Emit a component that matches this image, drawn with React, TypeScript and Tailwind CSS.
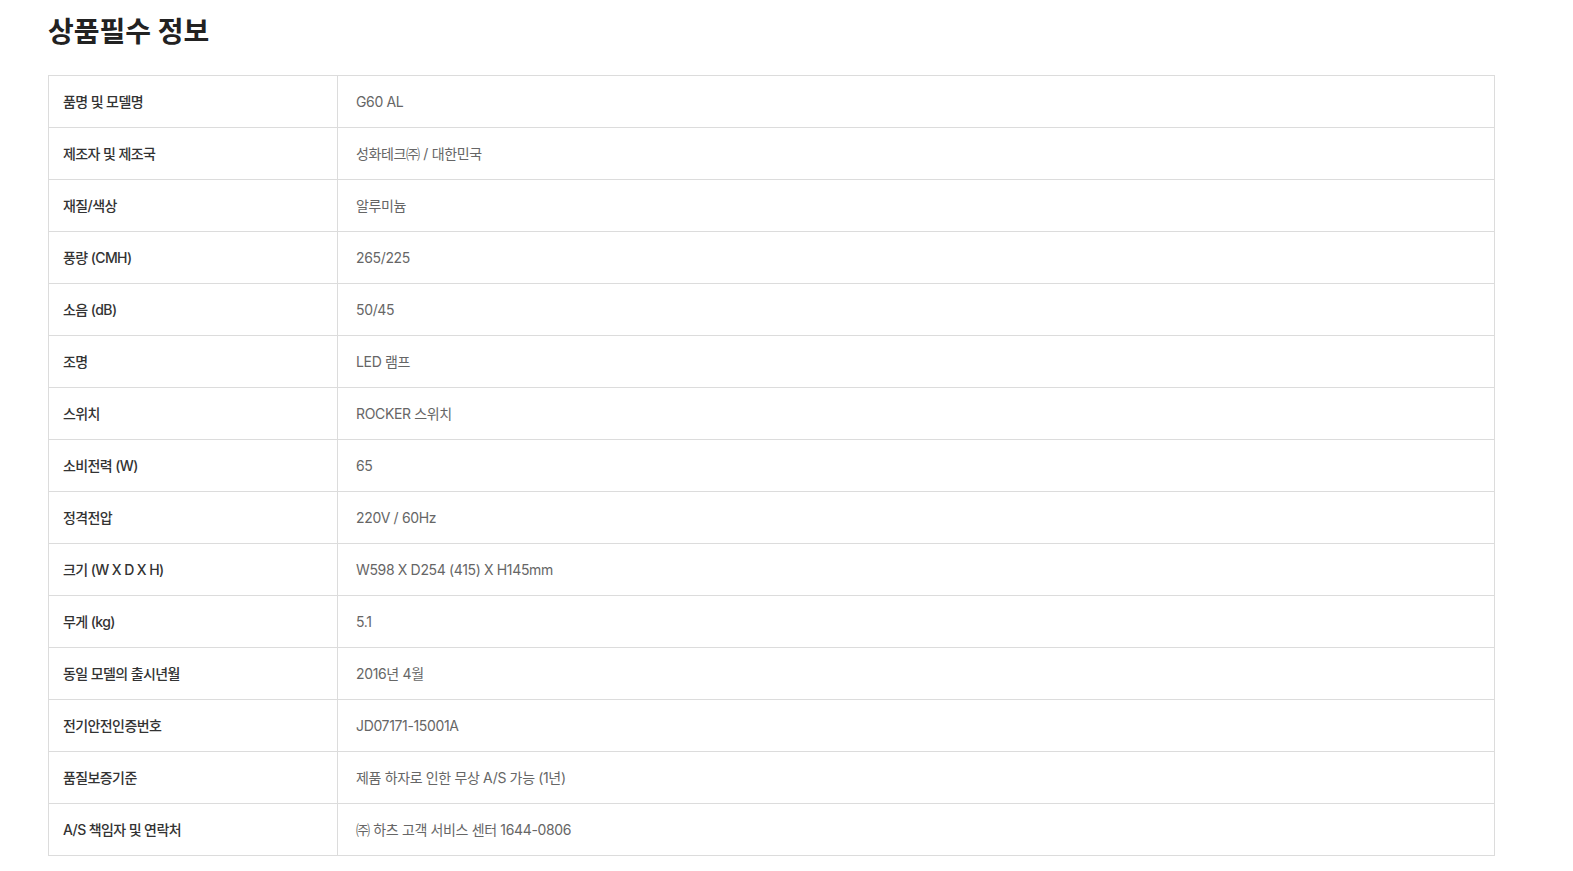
const rows: [string, string][] = [
  ["품명 및 모델명", "G60 AL"],
  ["제조자 및 제조국", "성화테크㈜ / 대한민국"],
  ["재질/색상", "알루미늄"],
  ["풍량 (CMH)", "265/225"],
  ["소음 (dB)", "50/45"],
  ["조명", "LED 램프"],
  ["스위치", "ROCKER 스위치"],
  ["소비전력 (W)", "65"],
  ["정격전압", "220V / 60Hz"],
  ["크기 (W X D X H)", "W598 X D254 (415) X H145mm"],
  ["무게 (kg)", "5.1"],
  ["동일 모델의 출시년월", "2016년 4월"],
  ["전기안전인증번호", "JD07171-15001A"],
  ["품질보증기준", "제품 하자로 인한 무상 A/S 가능 (1년)"],
  ["A/S 책임자 및 연락처", "㈜ 하츠 고객 서비스 센터 1644-0806"],
];

export default function App() {
  return (
    <div
      className="min-h-screen bg-white pl-[48px] pr-[78px] pt-[12px]"
      style={{ fontFamily: 'Inter, "Noto Sans CJK KR", sans-serif' }}
    >
      <h2 className="text-[28px] font-bold leading-[40px] text-[#222]">
        상품필수 정보
      </h2>
      <table className="mt-[23px] w-full border-collapse border border-[#dcdcdc]">
        <tbody>
          {rows.map(([label, value]) => (
            <tr key={label} className="h-[52px]">
              <th className="w-[289px] border border-[#dcdcdc] pb-[1px] pl-[14px] text-left text-[14px] font-medium tracking-[-0.6px] text-[#333]">
                {label}
              </th>
              <td className="border border-[#dcdcdc] pb-[1px] pl-[18px] text-[14px] tracking-[-0.35px] text-[#666]">
                {value}
              </td>
            </tr>
          ))}
        </tbody>
      </table>
    </div>
  );
}
